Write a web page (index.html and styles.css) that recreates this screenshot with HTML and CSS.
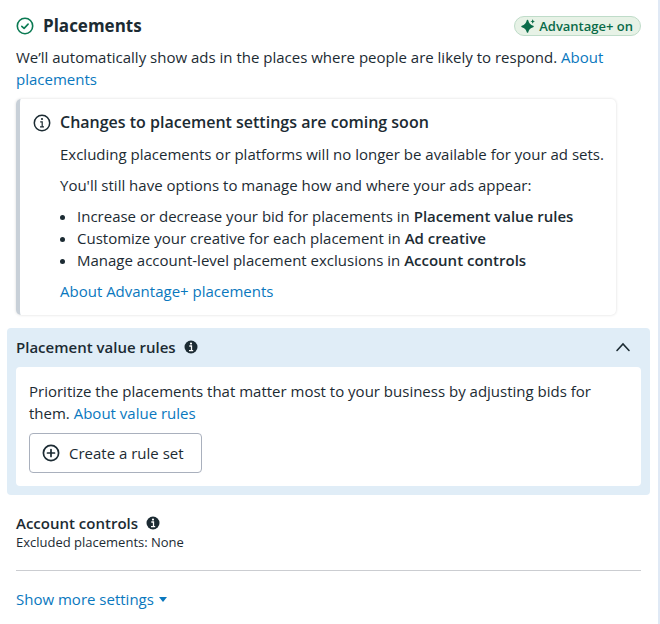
FILE: index.html
```html
<!DOCTYPE html>
<html lang="en">

<head>
  <meta charset="UTF-8">
  <meta name="viewport" content="width=device-width, initial-scale=1.0">
  <title>Placements</title>
  <link rel="stylesheet" href="styles.css">
</head>

<body>
  <main class="panel">
    <header class="panelHeader">
      <svg class="icon" width="18" height="18" viewBox="0 0 18 18" fill="none" stroke="#0b7a53" stroke-width="1.6" stroke-linecap="round" stroke-linejoin="round" aria-hidden="true">
        <circle cx="9" cy="9" r="7.7" />
        <path d="M5.8 9.3l2.3 2.1 4-4.3" />
      </svg>
      <h1>Placements</h1>
      <span class="badge">
        <svg width="14" height="14" viewBox="0 0 14 14" fill="#0a6b49" aria-hidden="true">
          <path d="M6.5 1.5C7.2 4.9 8.5 6.6 12 7.5C8.5 8.4 7.2 9.9 6.5 13C5.8 9.9 4.5 8.4 1 7.5C4.5 6.6 5.8 4.9 6.5 1.5Z" stroke="#0a6b49" stroke-width="1.5" stroke-linejoin="round" />
          <path d="M11.7 .3l.8 1.6 1.5.6-1.5.6-.8 1.6-.8-1.6-1.5-.6 1.5-.6z" />
        </svg>
        Advantage+ on
      </span>
    </header>

    <p class="intro">We’ll automatically show ads in the places where people are likely to respond. <a href="#">About placements</a></p>

    <section class="notice">
      <svg class="icon" width="18" height="18" viewBox="0 0 18 18" fill="none" stroke="#1c2b33" stroke-width="1.5" aria-hidden="true">
        <circle cx="9" cy="9" r="7.7" />
        <path d="M7.2 7.8h2v5M7 12.8h4" stroke-width="1.2" />
        <circle cx="9" cy="5" r="1.1" fill="#1c2b33" stroke="none" />
      </svg>
      <div class="noticeBody">
        <h2>Changes to placement settings are coming soon</h2>
        <p>Excluding placements or platforms will no longer be available for your ad sets.</p>
        <p>You'll still have options to manage how and where your ads appear:</p>
        <ul>
          <li>Increase or decrease your bid for placements in <b>Placement value rules</b></li>
          <li>Customize your creative for each placement in <b>Ad creative</b></li>
          <li>Manage account-level placement exclusions in <b>Account controls</b></li>
        </ul>
        <p><a href="#">About Advantage+ placements</a></p>
      </div>
    </section>

    <section class="rules">
      <div class="rulesHeader">
        <h3>Placement value rules</h3>
        <svg width="14" height="14" viewBox="0 0 14 14" aria-hidden="true">
          <circle cx="7" cy="7" r="6.5" fill="#1c2b33" />
          <path d="M5.3 6h2.2v4.5M5 10.6h4.2" fill="none" stroke="#fff" stroke-width="1.3" />
          <circle cx="7" cy="3.6" r="1.1" fill="#fff" />
        </svg>
        <button class="toggle" type="button" aria-label="Collapse placement value rules">
          <svg width="16" height="16" viewBox="0 0 16 16" fill="none" stroke="#1c2b33" stroke-width="1.6" stroke-linecap="round" aria-hidden="true">
            <path d="M2 11.5l6-6.5 6 6.5" />
          </svg>
        </button>
      </div>
      <div class="rulesBody">
        <p>Prioritize the placements that matter most to your business by adjusting bids for them. <a href="#">About value rules</a></p>
        <button class="create" type="button">
          <svg width="18" height="18" viewBox="0 0 18 18" fill="none" stroke="#1c2b33" stroke-width="1.7" stroke-linecap="round" aria-hidden="true">
            <circle cx="9" cy="9" r="7.6" />
            <path d="M9 5.5v7M5.5 9h7" />
          </svg>
          Create a rule set
        </button>
      </div>
    </section>

    <section class="account">
      <div class="accountTitle">
        <h3>Account controls</h3>
        <svg width="14" height="14" viewBox="0 0 14 14" aria-hidden="true">
          <circle cx="7" cy="7" r="6.5" fill="#1c2b33" />
          <path d="M5.3 6h2.2v4.5M5 10.6h4.2" fill="none" stroke="#fff" stroke-width="1.3" />
          <circle cx="7" cy="3.6" r="1.1" fill="#fff" />
        </svg>
      </div>
      <p>Excluded placements: None</p>
    </section>

    <button class="more" type="button">
      Show more settings
      <svg width="8" height="5" viewBox="0 0 8 5" fill="#0a78be" aria-hidden="true"><path d="M0 0h8L4 5z" /></svg>
    </button>
  </main>
</body>

</html>
```
FILE: styles.css
```css
* {
  box-sizing: border-box;
}

body {
  margin: 0;
  background-color: #fff;
  color: #1c2b33;
  font-family: "Open Sans", "Noto Sans", sans-serif;
  font-size: 15px;
  line-height: 22px;
}

h1, h2, h3, p, ul {
  margin: 0;
}

h1, h2, h3, b {
  font-weight: 600;
}

a {
  color: #0a78be;
  text-decoration: none;
}

button {
  border: 0;
  padding: 0;
  background: none;
  color: inherit;
  font: inherit;
  cursor: pointer;
}

svg {
  flex: none;
}

.panel {
  min-height: 100vh;
  padding: 14px 17px 12px 16px;
  border-right: 2px solid #e0e9f5;
}

.panelHeader {
  display: flex;
  align-items: center;
  gap: 9px;
}

h1 {
  font-size: 17px;
  font-weight: 700;
  line-height: 24px;
}

.badge {
  display: flex;
  align-items: center;
  gap: 4px;
  height: 20px;
  margin-left: auto;
  padding: 0 7px 0 6px;
  border: 1px solid #bfdcc9;
  border-radius: 10px;
  background-color: #e7f2e6;
  color: #0a6b49;
  font-size: 13px;
  font-weight: 600;
}

.intro {
  margin-top: 8px;
}

/* notice card */
.notice {
  display: flex;
  gap: 9px;
  margin: 9px 25px 0 0;
  padding: 12px 8px 13px 13px;
  border-left: 4px solid #c8d0d8;
  border-radius: 5px;
  box-shadow: 0 0 3px rgba(0, 0, 0, .15);
}

.notice .icon {
  margin-top: 3px;
}

.noticeBody {
  display: grid;
  gap: 9px;
}

h2 {
  font-size: 16px;
  line-height: 23px;
}

.notice ul {
  padding-left: 17px;
}

/* placement value rules */
.rules {
  margin: 13px -9px 0;
  padding: 0 9px 9px;
  border-radius: 4px;
  background-color: #e0edf7;
}

.rulesHeader {
  display: flex;
  align-items: center;
  gap: 8px;
  height: 39px;
  padding-bottom: 2px;
}

h3 {
  font-size: 15px;
  line-height: 22px;
}

.toggle {
  display: flex;
  margin-left: auto;
  margin-right: 10px;
}

.rulesBody {
  padding: 13px;
  border-radius: 4px;
  background-color: #fff;
}

.create {
  display: flex;
  align-items: center;
  gap: 9px;
  height: 40px;
  margin-top: 9px;
  padding: 0 17px 0 12px;
  border: 1px solid #a9b0bd;
  border-radius: 4px;
  font-weight: 500;
}

/* account controls */
.account {
  padding: 17px 0 20px;
  border-bottom: 1px solid #cbcdd1;
}

.accountTitle {
  display: flex;
  align-items: center;
  gap: 8px;
}

.account p {
  font-size: 13px;
  line-height: 16px;
}

.more {
  display: flex;
  align-items: center;
  gap: 5px;
  margin-top: 17px;
  color: #0a78be;
}
```
